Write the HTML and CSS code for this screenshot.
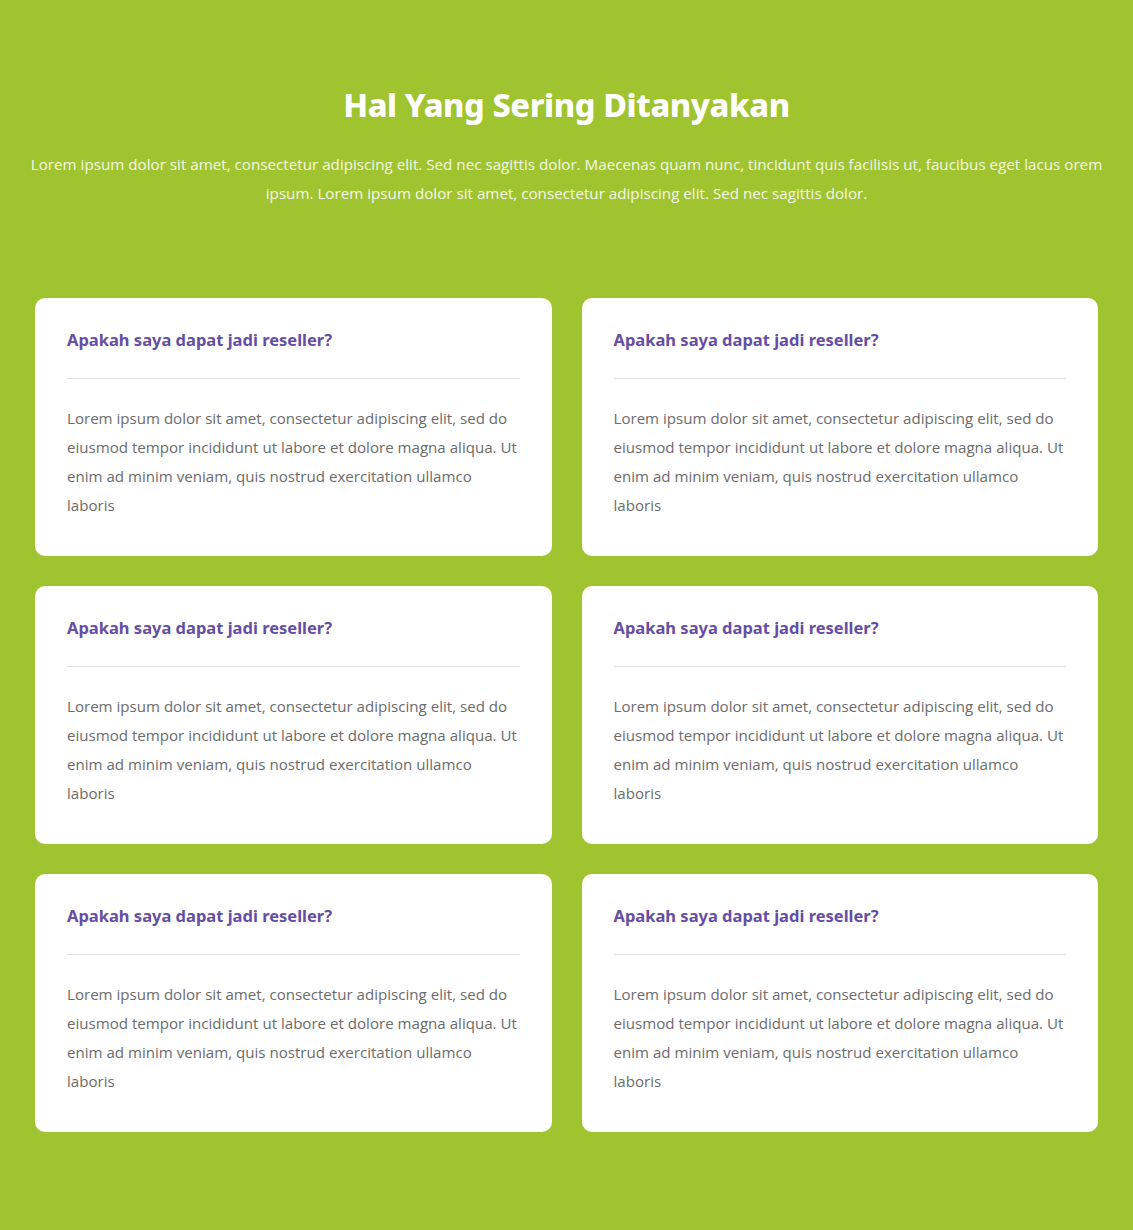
FILE: index.html
```html
<!DOCTYPE html>
<html lang="id">
<head>
<meta charset="utf-8">
<title>FAQ</title>
<link rel="stylesheet" href="styles.css">
</head>
<body>
<section class="faq">
  <header class="faq-head">
    <h1 class="faq-title">Hal Yang Sering Ditanyakan</h1>
    <p class="faq-lead">Lorem ipsum dolor sit amet, consectetur adipiscing elit. Sed nec sagittis dolor. Maecenas quam nunc, tincidunt quis facilisis ut, faucibus eget lacus orem ipsum. Lorem ipsum dolor sit amet, consectetur adipiscing elit. Sed nec sagittis dolor.</p>
  </header>
  <div class="faq-grid">
    <article class="card">
      <h2 class="card-q">Apakah saya dapat jadi reseller?</h2>
      <p class="card-a">Lorem ipsum dolor sit amet, consectetur adipiscing elit, sed do eiusmod tempor incididunt ut labore et dolore magna aliqua. Ut enim ad minim veniam, quis nostrud exercitation ullamco laboris</p>
    </article>
    <article class="card">
      <h2 class="card-q">Apakah saya dapat jadi reseller?</h2>
      <p class="card-a">Lorem ipsum dolor sit amet, consectetur adipiscing elit, sed do eiusmod tempor incididunt ut labore et dolore magna aliqua. Ut enim ad minim veniam, quis nostrud exercitation ullamco laboris</p>
    </article>
    <article class="card">
      <h2 class="card-q">Apakah saya dapat jadi reseller?</h2>
      <p class="card-a">Lorem ipsum dolor sit amet, consectetur adipiscing elit, sed do eiusmod tempor incididunt ut labore et dolore magna aliqua. Ut enim ad minim veniam, quis nostrud exercitation ullamco laboris</p>
    </article>
    <article class="card">
      <h2 class="card-q">Apakah saya dapat jadi reseller?</h2>
      <p class="card-a">Lorem ipsum dolor sit amet, consectetur adipiscing elit, sed do eiusmod tempor incididunt ut labore et dolore magna aliqua. Ut enim ad minim veniam, quis nostrud exercitation ullamco laboris</p>
    </article>
    <article class="card">
      <h2 class="card-q">Apakah saya dapat jadi reseller?</h2>
      <p class="card-a">Lorem ipsum dolor sit amet, consectetur adipiscing elit, sed do eiusmod tempor incididunt ut labore et dolore magna aliqua. Ut enim ad minim veniam, quis nostrud exercitation ullamco laboris</p>
    </article>
    <article class="card">
      <h2 class="card-q">Apakah saya dapat jadi reseller?</h2>
      <p class="card-a">Lorem ipsum dolor sit amet, consectetur adipiscing elit, sed do eiusmod tempor incididunt ut labore et dolore magna aliqua. Ut enim ad minim veniam, quis nostrud exercitation ullamco laboris</p>
    </article>
  </div>
</section>
</body>
</html>
```

FILE: styles.css
```css
* { box-sizing: border-box; }
html, body { margin: 0; padding: 0; }
body {
  background: #a0c330;
  font-family: "Open Sans", "Lato", sans-serif;
  min-height: 1230px;
}
.faq {
  padding: 83px 29px 98px;
}
.faq-head {
  text-align: center;
}
.faq-title {
  margin: 0;
  font-family: "Noto Sans", sans-serif;
  font-weight: 800;
  font-size: 32.5px;
  line-height: 44px;
  color: #ffffff;
  letter-spacing: -0.4px;
}
.faq-lead {
  margin: 23px 0 0;
  font-size: 15.2px;
  line-height: 29px;
  color: #f4f8e6;
}
.faq-grid {
  margin: 90px 6px 0;
  display: grid;
  grid-template-columns: 1fr 1fr;
  gap: 30px;
}
.card {
  background: #ffffff;
  border-radius: 10px;
  padding: 32px 32px 36px;
}
.card-q {
  margin: 0;
  font-family: "Noto Sans", sans-serif;
  font-weight: 700;
  font-size: 16.5px;
  line-height: 20px;
  color: #654ea3;
  padding-bottom: 28px;
  border-bottom: 1px solid #dde2df;
}
.card-a {
  margin: 25px 0 0;
  font-size: 15.1px;
  line-height: 29px;
  color: #6b6b6b;
}
```
